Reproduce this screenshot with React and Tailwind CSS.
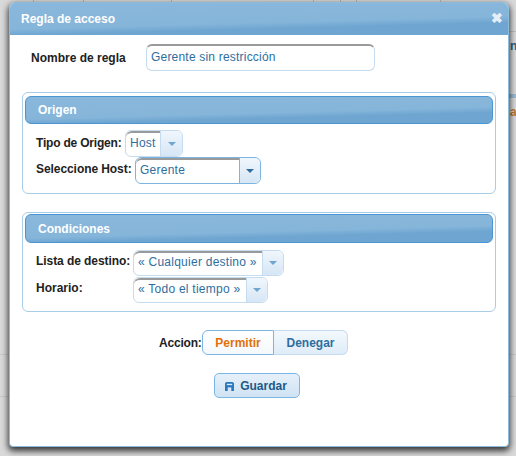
const barBg = 'bg-[linear-gradient(178.5deg,#8ab8dc_0%,#86b5da_58%,#6ea6d1_72%,#6fa6d1_100%)]'

function Combo({ value, width, textWidth, height = 'h-[27px]', textPad = 'pt-[2px]', active }) {
    return (
        <div className={`flex rounded-[6px] border bg-white ${height} ${active ? 'border-[#7db4e0]' : 'border-[#c5dbef]'} ${width}`}>
            <div className={`${textWidth} ${textPad} rounded-l-[6px] border-t-2 border-t-[#9a9a9a] pl-1 text-[12px] leading-[16px] tracking-[0.25px] text-[#2e6e9e] overflow-hidden whitespace-nowrap`}>
                {value}
            </div>
            <div className={`flex flex-1 items-center justify-center rounded-r-[6px] border-l bg-gradient-to-b from-[#f0f6fc] to-[#d6e6f5] ${active ? 'border-l-[#7db4e0]' : 'border-l-[#c5dbef]'}`}>
                <span className={`border-x-[4px] border-t-[4px] border-x-transparent ${active ? 'border-t-[#2e6e9e]' : 'border-t-[#6ea6d1]'}`} />
            </div>
        </div>
    )
}

function SectionBar({ title, height }) {
    return (
        <div className={`mx-[2px] flex items-center rounded-[6px] border border-[#4a95d3] pl-[12px] text-[12px] font-bold text-white ${height} ${barBg}`}>
            {title}
        </div>
    )
}

export default function App() {
    return (
        <div className="relative h-[456px] w-[516px] overflow-hidden bg-[#d9d9d9] font-['Liberation_Sans',Arial,sans-serif]">
            {/* Page behind the overlay */}
            <div className="absolute left-[33px] top-0 h-[3px] w-[1px] bg-[#b5b5b5]" />
            <div className="absolute left-[83px] top-0 h-[3px] w-[1px] bg-[#b5b5b5]" />
            <div className="absolute left-[171px] top-0 h-[3px] w-[1px] bg-[#b5b5b5]" />
            <div className="absolute left-[313px] top-0 h-[3px] w-[1px] bg-[#b5b5b5]" />
            <div className="absolute left-[340px] top-0 h-[3px] w-[1px] bg-[#b5b5b5]" />
            <div className="absolute left-[356px] top-0 h-[3px] w-[1px] bg-[#b5b5b5]" />
            <div className="absolute left-[440px] top-0 h-[3px] w-[1px] bg-[#b5b5b5]" />
            <div className="absolute left-0 top-[354px] h-[1px] w-[516px] bg-[#c9c9c9]" />
            <div className="absolute left-0 top-[396px] h-[1px] w-[516px] bg-[#c9c9c9]" />
            <div className="absolute left-[508px] top-[31px] h-[1px] w-[8px] bg-[#c0c0c0]" />
            <div className="absolute left-[508px] top-[94px] h-[4px] w-[8px] bg-[#9dbbd3]" />
            <span className="absolute left-[510px] top-[37px] text-[12px] font-bold text-[#2e5f85]">n</span>
            <span className="absolute left-[510px] top-[103px] text-[12px] font-bold text-[#c4742c]">a</span>

            {/* Dialog */}
            <div className="absolute left-[9px] top-[2px] flex h-[445px] w-[500px] flex-col rounded-[6px] rounded-b-[4px] border border-[#8fbbdb] bg-white shadow-[0_3px_6px_1px_rgba(0,0,0,0.75)]">
                <div className={`flex h-[32px] shrink-0 items-center justify-between rounded-t-[5px] pl-[11px] pr-[3px] text-[12px] font-bold text-white ${barBg}`}>
                    <span>Regla de acceso</span>
                    <span className="mb-[2px] mr-[2px] text-[14px] leading-none text-[#e6eff7]">✖</span>
                </div>

                <div className="flex flex-col px-[12px]">
                    <div className="ml-[9px] mt-[9px] flex h-[27px] items-center">
                        <span className="w-[115px] text-[12px] font-bold text-[#222]">Nombre de regla</span>
                        <div className="h-[27px] w-[229px] rounded-[6px] border border-[#c5dbef] border-t-2 border-t-[#9a9a9a] pl-1 pt-[2px] text-[12px] tracking-[0.2px] text-[#2e6e9e]">
                            Gerente sin restricción
                        </div>
                    </div>

                    <div className="mt-[21px] h-[102px] w-[474px] rounded-[6px] border border-[#a8cde8] pt-[3px]">
                        <SectionBar title="Origen" height="h-[28px]" />
                        <div className="ml-[13px] mt-[6px] flex h-[27px] items-center">
                            <span className="w-[89px] whitespace-nowrap pb-[2px] text-[12px] font-bold tracking-[-0.2px] text-[#222]">Tipo de Origen:</span>
                            <Combo value="Host" width="w-[58px]" textWidth="w-[34px]" />
                        </div>
                        <div className="ml-[13px] flex h-[27px] items-center">
                            <span className="w-[99px] whitespace-nowrap pb-[4px] text-[12px] font-bold tracking-[-0.07px] text-[#222]">Seleccione Host:</span>
                            <Combo value="Gerente" width="w-[126px]" textWidth="w-[103px]" active />
                        </div>
                    </div>

                    <div className="mt-[18px] h-[100px] w-[474px] rounded-[6px] border border-[#a8cde8] pt-[1px]">
                        <SectionBar title="Condiciones" height="h-[29px]" />
                        <div className="ml-[13px] mt-[7px] flex h-[27px] items-start">
                            <span className="w-[97px] whitespace-nowrap pt-[2px] text-[12px] font-bold tracking-[-0.07px] text-[#222]">Lista de destino:</span>
                            <Combo value="« Cualquier destino »" width="w-[151px]" textWidth="w-[128px]" height="h-[26px]" textPad="pt-[1px]" />
                        </div>
                        <div className="ml-[13px] flex h-[27px] items-start">
                            <span className="w-[97px] pt-[2px] text-[12px] font-bold text-[#222]">Horario:</span>
                            <Combo value="« Todo el tiempo »" width="w-[135px]" textWidth="w-[112px]" height="h-[26px]" textPad="pt-[1px]" />
                        </div>
                    </div>

                    <div className="mt-[18px] flex h-[25px] items-center justify-center pr-[11px]">
                        <span className="w-[43px] whitespace-nowrap text-[12px] font-bold tracking-[-0.2px] text-[#222]">Accion:</span>
                        <div className="flex h-[25px] w-[72px] items-center justify-center rounded-l-[6px] border border-[#7db4e0] bg-gradient-to-b from-white to-[#f5f9fc] text-[12px] font-bold text-[#e17009]">
                            Permitir
                        </div>
                        <div className="flex h-[25px] w-[74px] items-center justify-center rounded-r-[6px] border border-l-0 border-[#c5dbef] bg-gradient-to-b from-[#f3f8fd] to-[#dfecf8] text-[12px] font-bold text-[#2e6e9e]">
                            Denegar
                        </div>
                    </div>

                    <div className="mt-[18px] flex justify-center pr-[5px]">
                        <div className="flex h-[25px] w-[86px] items-center justify-center gap-[6px] rounded-[5px] border border-[#79b7e7] bg-gradient-to-b from-[#e6f0fa] to-[#d0e3f4] pr-[1px] text-[12px] font-bold text-[#1d5987]">
                            <svg width="9" height="9" viewBox="0 0 10 10" className="mt-[2px]">
                                <path d="M1.5 0h7L10 1.5V10H0V1.5z" fill="#2a78c0" />
                                <rect x="2" y="2" width="6" height="1.5" fill="#d8e8f6" />
                                <rect x="3" y="6" width="4" height="4" fill="#d8e8f6" />
                            </svg>
                            Guardar
                        </div>
                    </div>
                </div>
            </div>
        </div>
    )
}
